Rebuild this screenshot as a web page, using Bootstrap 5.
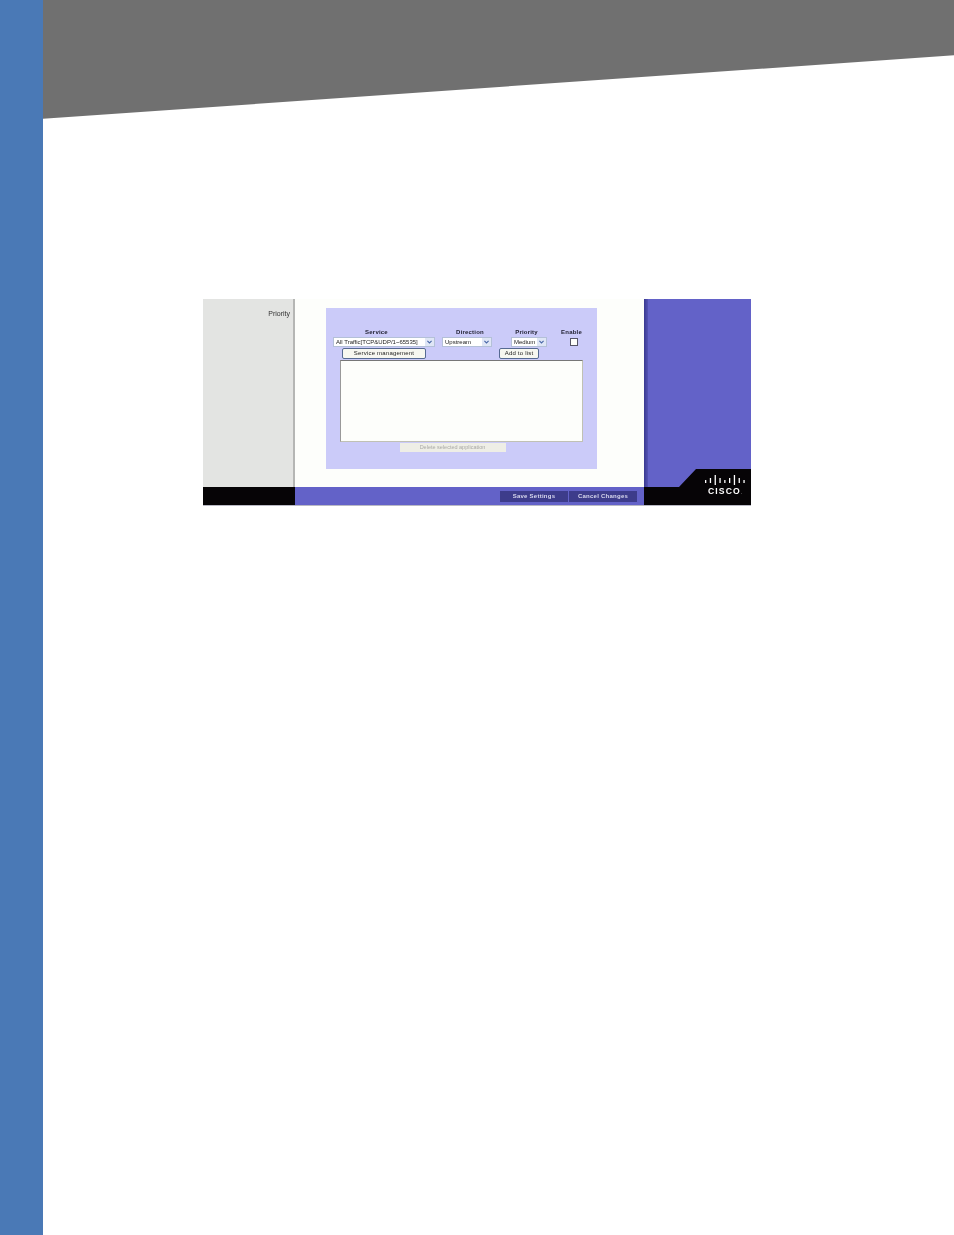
<!DOCTYPE html>
<html lang="en">
<head>
<meta charset="utf-8">
<title>Priority</title>
<link rel="stylesheet" href="https://cdn.jsdelivr.net/npm/bootstrap@5.3.0/dist/css/bootstrap.min.css">
<style>
html,body{height:1235px;overflow:hidden;background:#fff;font-family:"Liberation Sans",Arial,sans-serif}
.strip{width:43px;background:#4a79b6;position:relative;z-index:1}
.wedge-clip{height:120px;overflow:hidden}
.wedge{height:123px;margin:-3px -4px 0 -4px;background:#707070;clip-path:polygon(0 0,100% 0,100% 58px,0 122px);filter:blur(.5px)}
.shot{width:548px;height:206px;margin:179px 0 0 160px;background:#fdfefb;filter:blur(.45px);font-size:6px;line-height:7px;color:#222;border-bottom:1px solid #b9b9c4;box-sizing:content-box}
.lcol{width:92px;background:#e3e4e2}
.lcol-top{padding:11px 3px 0 0;text-align:right;font-size:7px;color:#333;border-right:2px solid #b5b6b4}
.black{height:18px;background:#060406}
.ccol{width:349px}
.panel{width:271px;height:161px;margin:9px 0 0 31px;padding:21px 0 0 7px;background:#cbcbf9}
.lbls{height:7px;font-weight:700;letter-spacing:.2px;color:#223}
.lbls span{display:block;text-align:center}
.l1{width:23px;margin-left:32px}
.l2{width:28px;margin-left:68px}
.l3{width:23px;margin-left:31px}
.l4{width:21px;margin-left:23px}
.ctrls{margin-top:1px;height:10px}
.form-select.pick{height:10px;min-height:0;padding:0 0 0 2px;font-size:6px;line-height:9px;color:#222;border:1px solid #b4c0d8;border-radius:0;background-color:#fff;background-repeat:no-repeat;background-image:url("data:image/svg+xml,%3Csvg xmlns='http://www.w3.org/2000/svg' viewBox='0 0 9 8'%3E%3Crect width='9' height='8' fill='%23dfe6f6'/%3E%3Cpath d='M2.4 2.8 4.5 4.9 6.6 2.8' fill='none' stroke='%234a68a8' stroke-width='1.1'/%3E%3C/svg%3E");background-size:9px 8px;background-position:right 0 center;box-shadow:none}
.s1{width:102px}
.s2{width:50px;margin-left:7px}
.s3{width:36px;margin-left:19px}
.form-check-input.tick{width:8px;height:8px;margin:1px 0 0 23px;border:1px solid #556;border-radius:0;background-color:#fdfefb;flex:none}
.btns{margin-top:1px;height:11px}
.btn.wbtn{height:11px;padding:0;font-size:6px;line-height:9px;color:#222;background:#f7f7f0;border:1px solid #566a92;border-radius:2px;letter-spacing:.2px}
.b1{width:84px;margin-left:9px}
.b2{width:40px;margin-left:73px}
.form-control.lbox{display:block;width:243.5px;height:82px;margin:1px 0 0 6.5px;padding:0;background:#fdfefb;border:1px solid #c0c1b4;border-top-color:#777;border-left-color:#999;border-radius:0;resize:none;box-shadow:none}
.btn.dbtn{display:block;width:106px;height:9px;margin:1px 0 0 66.5px;padding:0;font-size:5.5px;line-height:9px;color:#a9a9a6;background:#eeeee6;border:0;border-radius:0;opacity:1}
.bar{height:18px;background:#6362c8;padding-right:7px;column-gap:1px}
.btn.dark{width:68px;height:11px;padding:0;font-size:6px;line-height:11px;font-weight:700;letter-spacing:.25px;color:#d8d8ee;background:#3d3c8b;border:0;border-radius:0}
.rcol{width:107px;background:#6362c8}
.rstripe{position:absolute;left:0;top:0;bottom:0;width:4px;background:linear-gradient(90deg,#3a3990,#5554b5)}
.corner{display:block;position:absolute;left:0;bottom:0;width:107px;height:36px}
.logo{position:absolute;left:64px;bottom:9px;font-size:8.6px;line-height:8px;font-weight:700;letter-spacing:1.1px;color:#fff;white-space:nowrap}
.logo-dot{font-size:6px;font-weight:400;letter-spacing:0;color:#bbb}
</style>
</head>
<body class="m-0 d-flex">
<div class="strip flex-shrink-0"></div>
<main class="flex-grow-1">
  <div class="wedge-clip"><div class="wedge"></div></div>
  <div class="shot d-flex">
    <div class="lcol d-flex flex-column flex-shrink-0">
      <div class="lcol-top flex-grow-1">Priority</div>
      <div class="black"></div>
    </div>
    <div class="ccol d-flex flex-column flex-shrink-0">
      <div class="panel">
        <div class="lbls d-flex"><span class="l1">Service</span><span class="l2">Direction</span><span class="l3">Priority</span><span class="l4">Enable</span></div>
        <div class="ctrls d-flex">
          <select class="form-select pick s1"><option>All Traffic[TCP&amp;UDP/1~65535]</option></select>
          <select class="form-select pick s2"><option>Upstream</option></select>
          <select class="form-select pick s3"><option>Medium</option></select>
          <input class="form-check-input tick" type="checkbox" aria-label="Enable">
        </div>
        <div class="btns d-flex">
          <button type="button" class="btn wbtn b1">Service management</button>
          <button type="button" class="btn wbtn b2">Add to list</button>
        </div>
        <textarea class="form-control lbox" readonly aria-label="Applications"></textarea>
        <button type="button" class="btn dbtn" disabled>Delete selected application</button>
      </div>
      <div class="bar mt-auto d-flex justify-content-end align-items-center">
        <button type="button" class="btn dark">Save Settings</button>
        <button type="button" class="btn dark">Cancel Changes</button>
      </div>
    </div>
    <div class="rcol position-relative flex-shrink-0">
      <div class="rstripe"></div>
      <svg class="corner" viewBox="0 0 107 36" aria-hidden="true">
        <polygon points="0,18 35,18 52,0 107,0 107,36 0,36" fill="#060406"/>
        <g fill="#fff">
          <rect x="61" y="11" width="1.3" height="3"/>
          <rect x="65.8" y="9" width="1.3" height="5"/>
          <rect x="70.6" y="6" width="1.3" height="10"/>
          <rect x="75.4" y="9" width="1.3" height="5"/>
          <rect x="80.2" y="11" width="1.3" height="3"/>
          <rect x="85" y="9" width="1.3" height="5"/>
          <rect x="89.8" y="6" width="1.3" height="10"/>
          <rect x="94.6" y="9" width="1.3" height="5"/>
          <rect x="99.4" y="11" width="1.3" height="3"/>
        </g>
      </svg>
      <span class="logo">CISCO<span class="logo-dot">.</span></span>
    </div>
  </div>
</main>
<script src="https://cdn.jsdelivr.net/npm/bootstrap@5.3.0/dist/js/bootstrap.bundle.min.js"></script>
</body>
</html>
